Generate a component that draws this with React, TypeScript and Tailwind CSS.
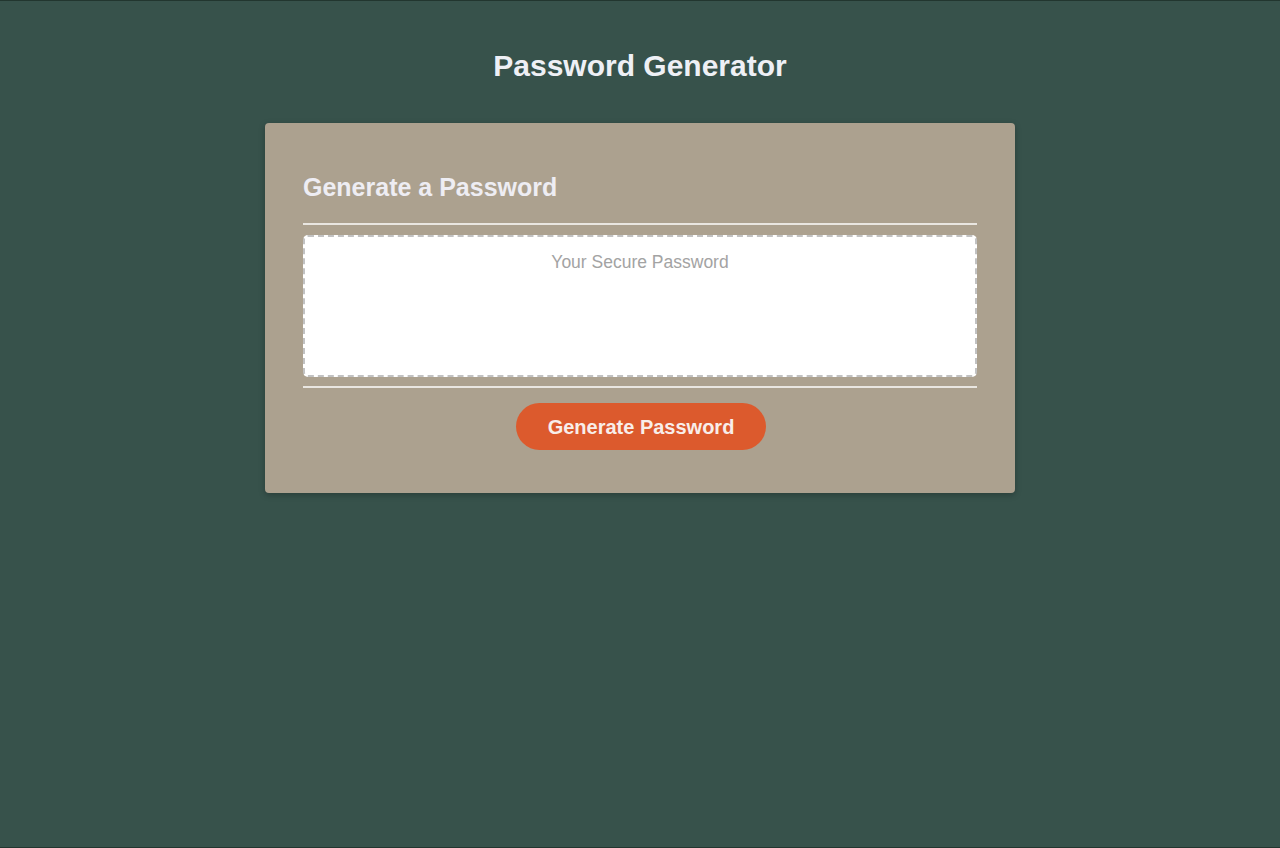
import React from "react";

export default function App() {
  return (
    <div
      className="h-[848px] w-full overflow-hidden border-y border-[#22362f] bg-[#37524b]"
      style={{ fontFamily: '"Liberation Sans", Arial, Helvetica, sans-serif' }}
    >
      <h1 className="pt-[47px] text-center text-[30px] font-bold leading-[36px] text-[#eef0f5]">
        Password Generator
      </h1>
      <div className="mx-auto mt-[39px] w-[750px] rounded-[4px] bg-[#aca18f] px-[38px] pb-[43px] pt-[49px] shadow-[0_2px_6px_rgba(0,0,0,0.25)]">
        <h2 className="text-[25px] font-bold leading-[30px] text-[#eeedf3]">
          Generate a Password
        </h2>
        <div className="mt-[21px] h-[2px] bg-[#e9e6e1]" />
        <div className="mt-[10px] h-[142px] rounded-[5px] border-2 border-dashed border-[#c2c2c2] bg-white pt-[14px] text-center text-[17.5px] leading-[22px] text-[#a3a3a3]">
          Your Secure Password
        </div>
        <div className="mt-[9px] h-[2px] bg-[#e9e6e1]" />
        <div className="mt-[15px] flex justify-center pl-[2px]">
          <button className="h-[47px] rounded-full bg-[#dc5a2d] px-[32px] pt-[1px] text-[20px] font-bold text-[#f8eeea]">
            Generate Password
          </button>
        </div>
      </div>
    </div>
  );
}
